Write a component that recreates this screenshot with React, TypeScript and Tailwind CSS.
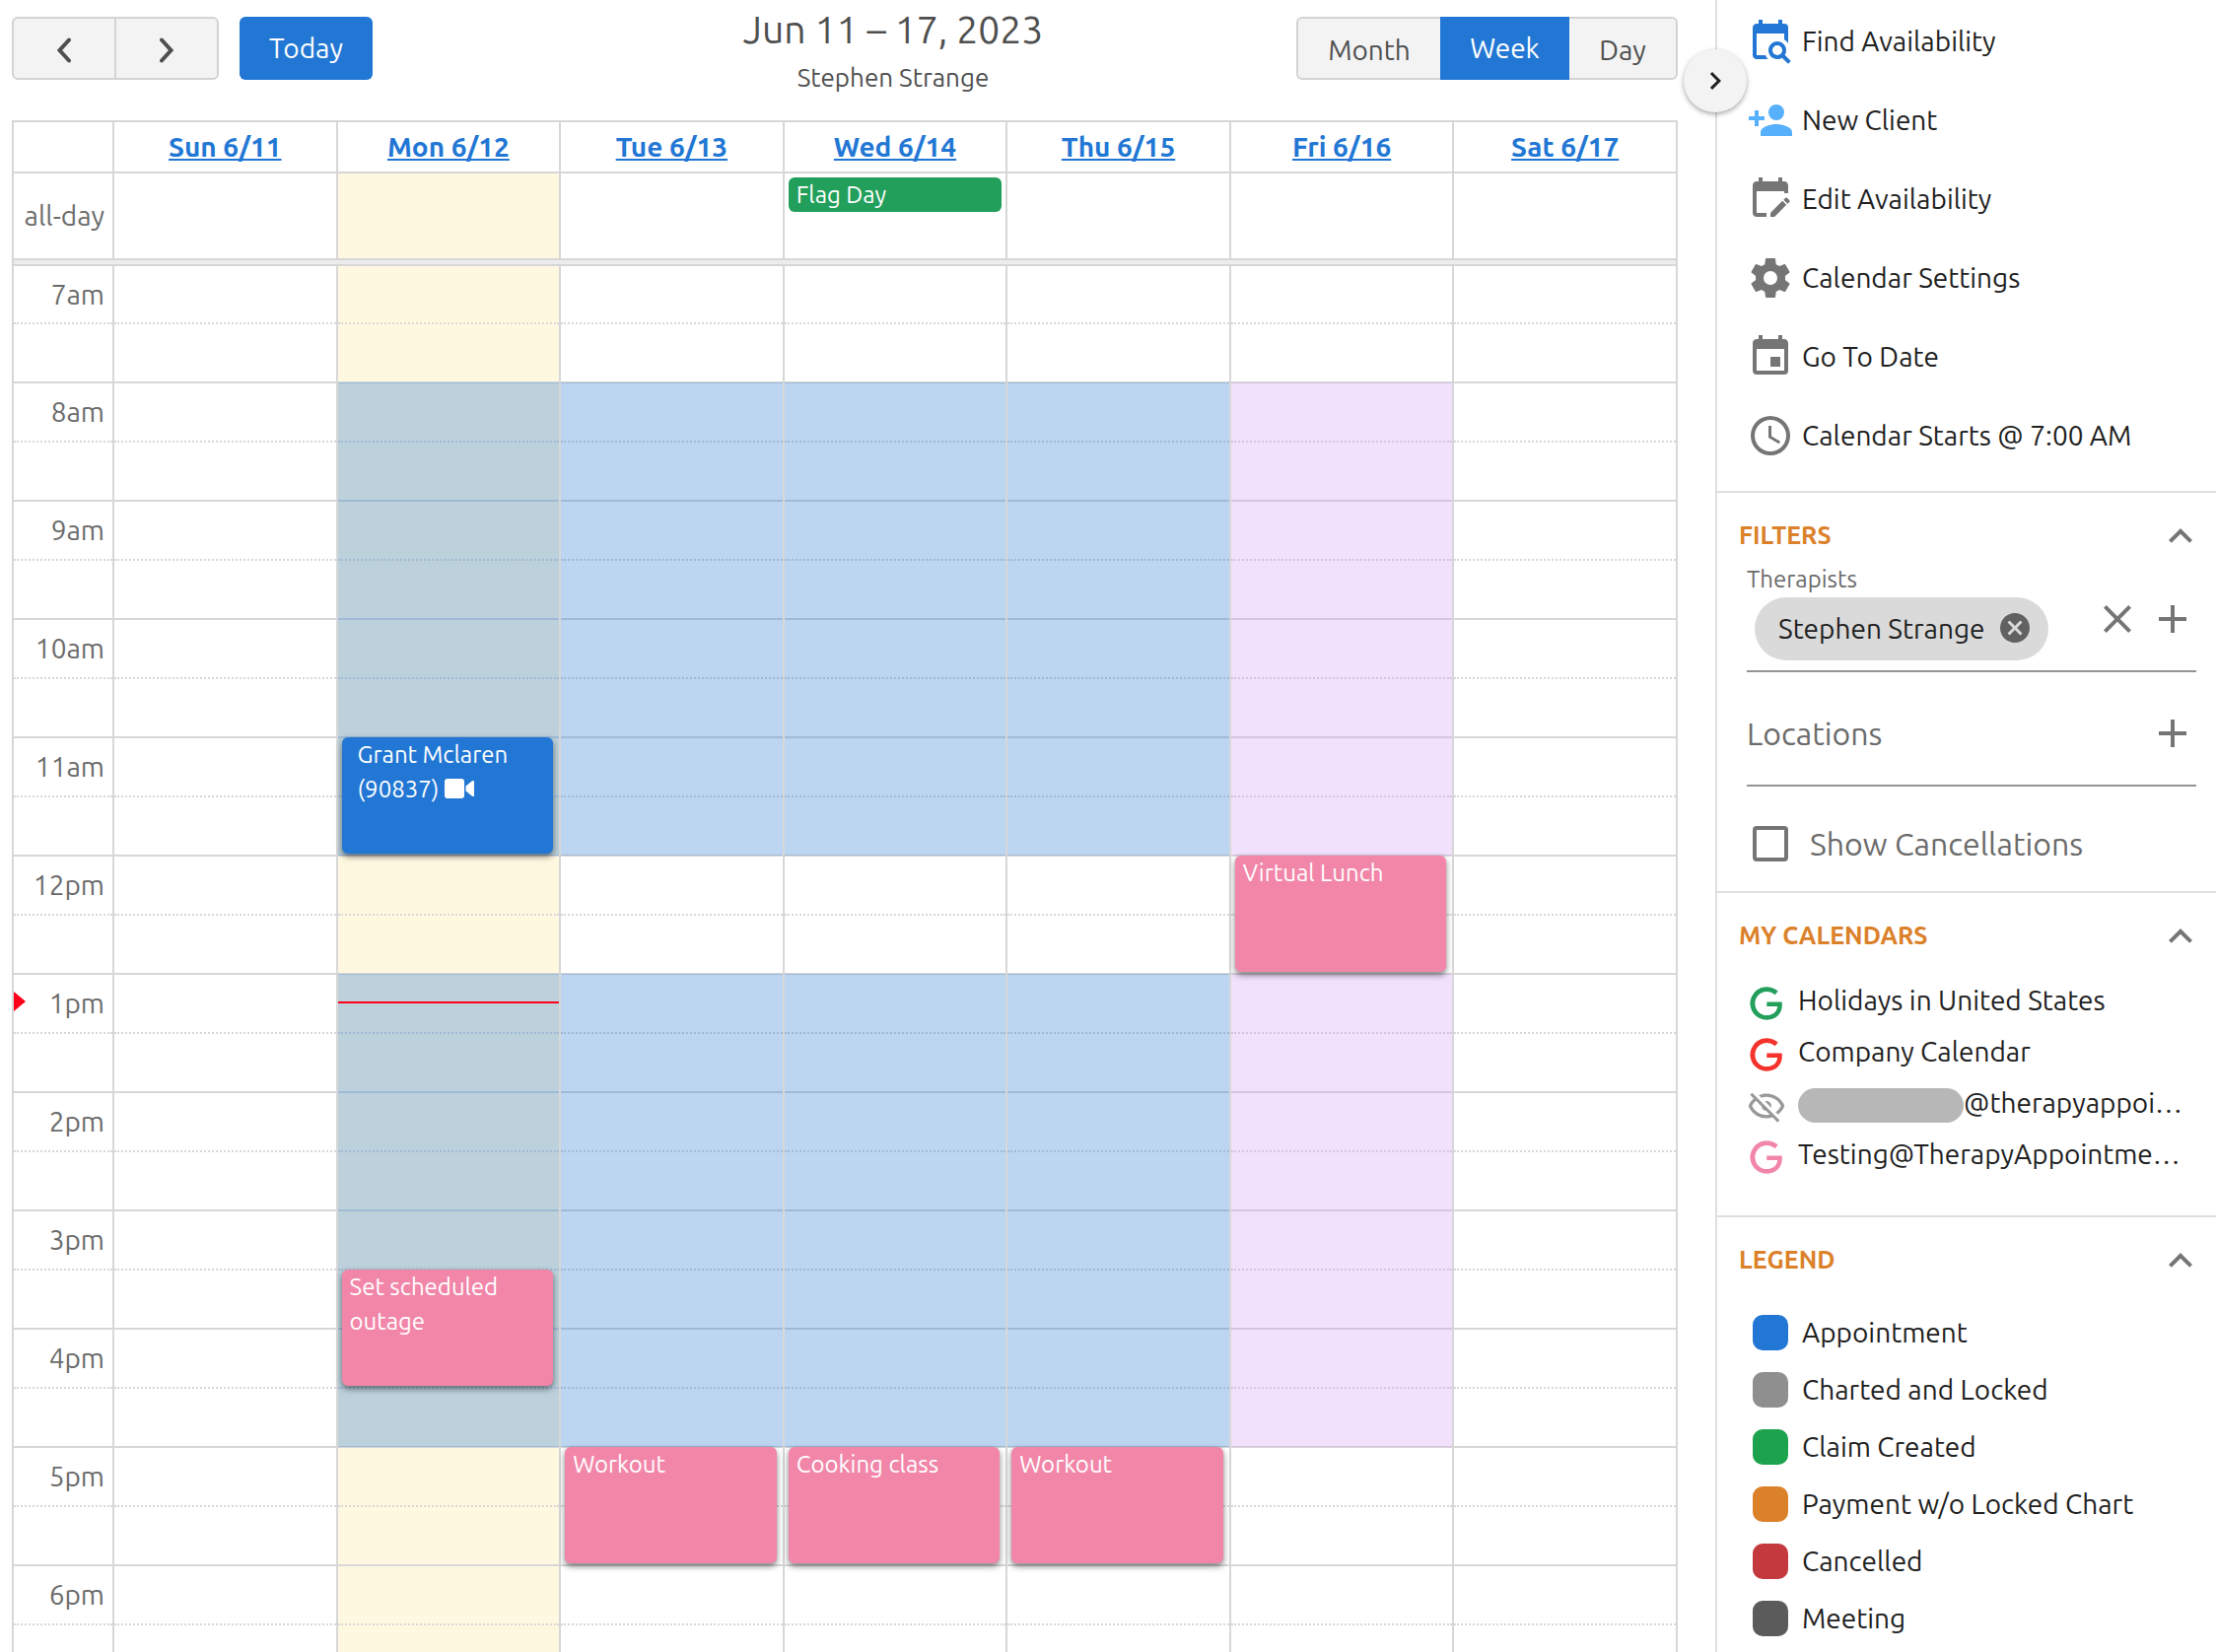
import type { ReactNode } from 'react'

type CalEvent = {
  title: string
  start: number
  end: number
  kind: 'appointment' | 'external'
  video?: boolean
}

type Day = {
  label: string
  today?: boolean
  allDay?: string
  availability?: 'office' | 'remote'
  events: CalEvent[]
}

const FIRST_HOUR = 7
const HOUR_HEIGHT = 120
const NOW = 13 + 14 / 60

const hours = [7, 8, 9, 10, 11, 12, 13, 14, 15, 16, 17, 18]

const days: Day[] = [
  { label: 'Sun 6/11', events: [] },
  {
    label: 'Mon 6/12',
    today: true,
    availability: 'office',
    events: [
      { title: 'Grant Mclaren (90837)', start: 11, end: 12, kind: 'appointment', video: true },
      { title: 'Set scheduled outage', start: 15.5, end: 16.5, kind: 'external' },
    ],
  },
  {
    label: 'Tue 6/13',
    availability: 'office',
    events: [{ title: 'Workout', start: 17, end: 18, kind: 'external' }],
  },
  {
    label: 'Wed 6/14',
    allDay: 'Flag Day',
    availability: 'office',
    events: [{ title: 'Cooking class', start: 17, end: 18, kind: 'external' }],
  },
  {
    label: 'Thu 6/15',
    availability: 'office',
    events: [{ title: 'Workout', start: 17, end: 18, kind: 'external' }],
  },
  {
    label: 'Fri 6/16',
    availability: 'remote',
    events: [{ title: 'Virtual Lunch', start: 12, end: 13, kind: 'external' }],
  },
  { label: 'Sat 6/17', events: [] },
]

const officeHours = [
  { start: 8, end: 12 },
  { start: 13, end: 17 },
]

const icons = {
  search:
    'M15.5,12C18,12 20,14 20,16.5C20,17.38 19.75,18.21 19.31,18.9L22.39,22L21,23.39L17.88,20.32C17.19,20.75 16.37,21 15.5,21C13,21 11,19 11,16.5C11,14 13,12 15.5,12M15.5,14A2.5,2.5 0 0,0 13,16.5A2.5,2.5 0 0,0 15.5,19A2.5,2.5 0 0,0 18,16.5A2.5,2.5 0 0,0 15.5,14M19,8H5V19H9.5C9.81,19.75 10.26,20.42 10.81,21H5C3.89,21 3,20.1 3,19V5C3,3.89 3.89,3 5,3H6V1H8V3H16V1H18V3H19A2,2 0 0,1 21,5V13.03C20.5,12.23 19.81,11.54 19,11V8Z',
  personAdd:
    'M15,14C12.33,14 7,15.33 7,18V20H23V18C23,15.33 17.67,14 15,14M6,10V7H4V10H1V12H4V15H6V12H9V10M15,12A4,4 0 0,0 19,8A4,4 0 0,0 15,4A4,4 0 0,0 11,8A4,4 0 0,0 15,12Z',
  edit:
    'M19,3H18V1H16V3H8V1H6V3H5C3.89,3 3,3.89 3,5V19C3,20.1 3.9,21 5,21H10V19H5V8H19V9H21V5C21,3.9 20.1,3 19,3M21.7,13.35L20.7,14.35L18.65,12.35L19.65,11.35C19.85,11.14 20.19,11.13 20.42,11.35L21.7,12.63C21.89,12.83 21.89,13.15 21.7,13.35M12,18.94V21H14.06L20.12,14.88L18.07,12.88L12,18.94Z',
  cog:
    'M12,15.5A3.5,3.5 0 0,1 8.5,12A3.5,3.5 0 0,1 12,8.5A3.5,3.5 0 0,1 15.5,12A3.5,3.5 0 0,1 12,15.5M19.43,12.97C19.47,12.65 19.5,12.33 19.5,12C19.5,11.67 19.47,11.34 19.43,11L21.54,9.37C21.73,9.22 21.78,8.95 21.66,8.73L19.66,5.27C19.54,5.05 19.27,4.96 19.05,5.05L16.56,6.05C16.04,5.66 15.5,5.32 14.87,5.07L14.5,2.42C14.46,2.18 14.25,2 14,2H10C9.75,2 9.54,2.18 9.5,2.42L9.13,5.07C8.5,5.32 7.96,5.66 7.44,6.05L4.95,5.05C4.73,4.96 4.46,5.05 4.34,5.27L2.34,8.73C2.21,8.95 2.27,9.22 2.46,9.37L4.57,11C4.53,11.34 4.5,11.67 4.5,12C4.5,12.33 4.53,12.65 4.57,12.97L2.46,14.63C2.27,14.78 2.21,15.05 2.34,15.27L4.34,18.73C4.46,18.95 4.73,19.03 4.95,18.95L7.44,17.94C7.96,18.34 8.5,18.68 9.13,18.93L9.5,21.58C9.54,21.82 9.75,22 10,22H14C14.25,22 14.46,21.82 14.5,21.58L14.87,18.93C15.5,18.67 16.04,18.34 16.56,17.94L19.05,18.95C19.27,19.03 19.54,18.95 19.66,18.73L21.66,15.27C21.78,15.05 21.73,14.78 21.54,14.63L19.43,12.97Z',
  calendar:
    'M19,19H5V8H19M16,1V3H8V1H6V3H5C3.89,3 3,3.89 3,5V19A2,2 0 0,0 5,21H19A2,2 0 0,0 21,19V5C21,3.89 20.1,3 19,3H18V1M17,12H12V17H17V12Z',
  clock:
    'M12,20A8,8 0 0,0 20,12A8,8 0 0,0 12,4A8,8 0 0,0 4,12A8,8 0 0,0 12,20M12,2A10,10 0 0,1 22,12A10,10 0 0,1 12,22C6.47,22 2,17.5 2,12A10,10 0 0,1 12,2M12.5,7V12.25L17,14.92L16.25,16.15L11,13V7H12.5Z',
  chevronUp: 'M7.41,15.41L12,10.83L16.59,15.41L18,14L12,8L6,14L7.41,15.41Z',
  chevronRight: 'M8.59,16.58L13.17,12L8.59,7.41L10,6L16,12L10,18L8.59,16.58Z',
  close:
    'M19,6.41L17.59,5L12,10.59L6.41,5L5,6.41L10.59,12L5,17.59L6.41,19L12,13.41L17.59,19L19,17.59L13.41,12L19,6.41Z',
  closeCircle:
    'M12,2C17.53,2 22,6.47 22,12C22,17.53 17.53,22 12,22C6.47,22 2,17.53 2,12C2,6.47 6.47,2 12,2M15.59,7L12,10.59L8.41,7L7,8.41L10.59,12L7,15.59L8.41,17L12,13.41L15.59,17L17,15.59L13.41,12L17,8.41L15.59,7Z',
  plus: 'M19,13H13V19H11V13H5V11H11V5H13V11H19V13Z',
  google:
    'M21.35,11.1H12.18V13.83H18.69C18.36,17.64 15.19,19.27 12.19,19.27C8.36,19.27 5,16.25 5,12C5,7.9 8.2,4.73 12.2,4.73C15.29,4.73 17.1,6.7 17.1,6.7L19,4.72C19,4.72 16.56,2 12.1,2C6.42,2 2.03,6.8 2.03,12C2.03,17.05 6.16,22 12.25,22C17.6,22 21.5,18.33 21.5,12.91C21.5,11.76 21.35,11.1 21.35,11.1V11.1Z',
  eyeOff:
    'M2,5.27L3.28,4L20,20.72L18.73,22L15.65,18.92C14.5,19.3 13.28,19.5 12,19.5C7,19.5 2.73,16.39 1,12C1.69,10.24 2.79,8.69 4.19,7.46L2,5.27M12,9A3,3 0 0,1 15,12C15,12.35 14.94,12.69 14.83,13L11,9.17C11.31,9.06 11.65,9 12,9M12,4.5C17,4.5 21.27,7.61 23,12C22.18,14.08 20.79,15.88 19,17.19L17.58,15.76C18.94,14.82 20.06,13.54 20.82,12C19.17,8.64 15.76,6.5 12,6.5C10.91,6.5 9.84,6.68 8.84,7L7.3,5.47C8.74,4.85 10.33,4.5 12,4.5M3.18,12C4.83,15.36 8.24,17.5 12,17.5C12.69,17.5 13.37,17.43 14,17.29L11.72,15C10.29,14.85 9.15,13.71 9,12.28L5.6,8.87C4.61,9.72 3.78,10.78 3.18,12Z',
}

const menuItems = [
  { label: 'Find Availability', icon: icons.search, color: 'text-[#2277d4]' },
  { label: 'New Client', icon: icons.personAdd, color: 'text-[#57b0fb]' },
  { label: 'Edit Availability', icon: icons.edit, color: 'text-[#757575]' },
  { label: 'Calendar Settings', icon: icons.cog, color: 'text-[#757575]' },
  { label: 'Go To Date', icon: icons.calendar, color: 'text-[#757575]' },
  { label: 'Calendar Starts @ 7:00 AM', icon: icons.clock, color: 'text-[#757575]' },
]

const calendars = [
  { label: 'Holidays in United States', icon: icons.google, color: 'text-[#239f5c]' },
  { label: 'Company Calendar', icon: icons.google, color: 'text-[#f4332c]' },
  { label: '@therapyappoi…', icon: icons.eyeOff, color: 'text-[#999999]', masked: true },
  { label: 'Testing@TherapyAppointme…', icon: icons.google, color: 'text-[#f186a9]' },
]

const legend = [
  { label: 'Appointment', color: 'bg-[#2277d4]' },
  { label: 'Charted and Locked', color: 'bg-[#8f8f8f]' },
  { label: 'Claim Created', color: 'bg-[#1da34d]' },
  { label: 'Payment w/o Locked Chart', color: 'bg-[#db812a]' },
  { label: 'Cancelled', color: 'bg-[#c3393e]' },
  { label: 'Meeting', color: 'bg-[#5b5b5b]' },
]

function Icon({ d, className }: { d: string; className: string }) {
  return (
    <svg viewBox="0 0 24 24" fill="currentColor" aria-hidden="true" className={`shrink-0 ${className}`}>
      <path d={d} />
    </svg>
  )
}

function formatHour(hour: number) {
  const h = hour > 12 ? hour - 12 : hour
  return `${h}${hour < 12 ? 'am' : 'pm'}`
}

function offset(time: number) {
  return Math.round((time - FIRST_HOUR) * HOUR_HEIGHT) - 2
}

function Slots({ labels }: { labels?: boolean }) {
  return (
    <>
      {hours.map((hour, i) => (
        <div key={hour}>
          <div
            className={`flex items-center justify-end pr-2 ${
              i === 0 ? 'h-[57px]' : 'h-[60px] border-t-2 border-[#d7d7d7]'
            }`}
          >
            {labels && formatHour(hour)}
          </div>
          <div className="h-[60px] border-t-2 border-dotted border-[#d7d7d7]" />
        </div>
      ))}
    </>
  )
}

function EventBlock({ event }: { event: CalEvent }) {
  return (
    <a
      href="#"
      className={`absolute left-1 right-[6px] rounded-md text-2xl leading-[35px] text-white shadow-[0_3px_6px_rgba(0,0,0,0.5)] ${
        event.kind === 'appointment' ? 'bg-[#2277d4] px-4' : 'bg-[#f186a9] px-2'
      }`}
      style={{
        top: offset(event.start),
        height: (event.end - event.start) * HOUR_HEIGHT - 2,
      }}
    >
      {event.title}
      {event.video && (
        <svg viewBox="0 0 30 20" fill="currentColor" className="ml-1.5 inline h-5 w-[30px] align-[-1px]">
          <rect width="20" height="20" rx="3" />
          <path d="M21.5 7.5 28 2.2c.8-.7 2-.2 2 .9v13.8c0 1.100-1.200 1.600-2 .9l-6.500-5.300z" />
        </svg>
      )}
    </a>
  )
}

function DayColumn({ day }: { day: Day }) {
  return (
    <div className="relative">
      <Slots />
      {day.availability &&
        officeHours.map((block) => (
          <div
            key={block.start}
            className={`absolute inset-x-0 ${
              day.availability === 'office' ? 'bg-[#2176d2]/30' : 'bg-[#d09bf5]/30'
            }`}
            style={{ top: offset(block.start), height: (block.end - block.start) * HOUR_HEIGHT }}
          />
        ))}
      {day.today && (
        <div className="absolute inset-x-0 border-t-2 border-[#ff0019]" style={{ top: offset(NOW) }} />
      )}
      {day.events.map((event) => (
        <EventBlock key={event.title} event={event} />
      ))}
    </div>
  )
}

function Toolbar() {
  const button = 'flex h-16 items-center justify-center border-2 border-[#d3d3d3] bg-[#f3f3f3] pt-[3px]'
  return (
    <header className="grid grid-cols-[485px_1fr_387px] items-start pt-[6px] text-[#4f4f4f]">
      <div className="mt-[11px] flex gap-[21px]">
        <div className="flex">
          <button aria-label="Previous week" className={`${button} w-[106px] rounded-l-md`}>
            <svg viewBox="0 0 14 26" fill="none" stroke="currentColor" strokeWidth="4" className="h-[26px] w-[14px]">
              <path d="M12 2.500 2.500 13 12 23.500" strokeLinecap="round" />
            </svg>
          </button>
          <button aria-label="Next week" className={`${button} -ml-0.5 w-[106px] rounded-r-md`}>
            <svg viewBox="0 0 14 26" fill="none" stroke="currentColor" strokeWidth="4" className="h-[26px] w-[14px]">
              <path d="M2 2.500 11.500 13 2 23.500" strokeLinecap="round" />
            </svg>
          </button>
        </div>
        <button className="h-16 w-[135px] rounded-md bg-[#2277d4] text-white">Today</button>
      </div>
      <div className="text-center">
        <h1 className="text-[39px] leading-12">Jun 11 – 17, 2023</h1>
        <p className="text-[26px] leading-[50px]">Stephen Strange</p>
      </div>
      <div className="mt-[11px] flex">
        <button className={`${button} flex-1 rounded-l-md border-r-0`}>Month</button>
        <button className="h-16 w-[131px] bg-[#2277d4] text-white">Week</button>
        <button className={`${button} w-[110px] rounded-r-md border-l-0`}>Day</button>
      </div>
    </header>
  )
}

function WeekGrid() {
  return (
    <table className="mt-[18px] w-full table-fixed border-collapse text-[#6b6b6b]">
      <thead>
        <tr>
          <th className="h-[52px] w-[102px] border-2 border-[#d7d7d7] p-0" />
          {days.map((day) => (
            <th key={day.label} scope="col" className="border-2 border-[#d7d7d7] p-0 leading-8">
              <a href="#" className="font-bold text-[#2277d4] underline">
                {day.label}
              </a>
            </th>
          ))}
        </tr>
      </thead>
      <tbody>
        <tr>
          <th scope="row" className="h-[88px] border-2 border-[#d7d7d7] py-0 pl-0 pr-2 text-right font-normal">
            all-day
          </th>
          {days.map((day) => (
            <td
              key={day.label}
              className={`border-2 border-[#d7d7d7] px-1 pt-1 pb-0 align-top ${day.today ? 'bg-[#fff8e1]' : ''}`}
            >
              {day.allDay && (
                <a
                  href="#"
                  className="block rounded-md bg-[#239f5c] px-2 text-2xl leading-[35px] text-white"
                >
                  {day.allDay}
                </a>
              )}
            </td>
          ))}
        </tr>
        <tr>
          <td colSpan={8} className="h-[6px] border-2 border-[#d7d7d7] bg-[#ececec] p-0" />
        </tr>
        <tr>
          <td className="border-2 border-[#d7d7d7] p-0 align-top">
            <div className="relative">
              <Slots labels />
              <svg
                viewBox="0 0 12 20"
                className="absolute left-0 h-5 w-3 -translate-y-1/2 text-[#ff0019]"
                style={{ top: offset(NOW) }}
              >
                <path d="M0 0l12 10L0 20z" fill="currentColor" />
              </svg>
            </div>
          </td>
          {days.map((day) => (
            <td
              key={day.label}
              className={`border-2 border-[#d7d7d7] p-0 align-top ${day.today ? 'bg-[#fff8e1]' : ''}`}
            >
              <DayColumn day={day} />
            </td>
          ))}
        </tr>
      </tbody>
    </table>
  )
}

function Section({ title, children }: { title: string; children: ReactNode }) {
  return (
    <section className="border-t-2 border-[#dfdfdf]">
      <div className="flex h-[72px] items-center justify-between pt-4 pl-[22px] pr-3">
        <h2 className="text-[25px] font-bold text-[#db812a] uppercase">{title}</h2>
        <button aria-label={`Collapse ${title}`} className="text-[#757575]">
          <Icon d={icons.chevronUp} className="size-12" />
        </button>
      </div>
      {children}
    </section>
  )
}

function Sidebar() {
  return (
    <aside className="relative w-[508px] shrink-0 border-l-2 border-[#dfdfdf] text-[#212121]">
      <button
        aria-label="Hide sidebar"
        className="absolute top-[50px] -left-[34px] flex size-16 items-center justify-center rounded-full bg-[#f3f3f3] shadow-[0_2px_5px_rgba(0,0,0,0.35)]"
      >
        <Icon d={icons.chevronRight} className="size-9" />
      </button>

      <nav className="pt-0.5 pb-4 pl-[30px]">
        {menuItems.map((item) => (
          <button key={item.label} className="flex h-20 w-full items-center gap-2 text-left">
            <Icon d={item.icon} className={`size-12 ${item.color}`} />
            {item.label}
          </button>
        ))}
      </nav>

      <Section title="Filters">
        <div className="pr-5 pl-[30px] text-[#6b6b6b]">
          <div className="border-b-2 border-[#949494] pb-[10px]">
            <p className="text-2xl leading-8">Therapists</p>
            <div className="flex items-start gap-2">
              <div className="mt-0.5 mr-auto ml-2 flex h-16 items-center gap-3 rounded-full bg-[#dadada] pr-4 pl-6 text-[#212121]">
                Stephen Strange
                <button aria-label="Remove Stephen Strange" className="pb-0.5 text-[#616161]">
                  <Icon d={icons.closeCircle} className="size-9" />
                </button>
              </div>
              <button aria-label="Clear therapists" className="text-[#757575]">
                <Icon d={icons.close} className="size-12" />
              </button>
              <button aria-label="Add therapist" className="text-[#757575]">
                <Icon d={icons.plus} className="size-12" />
              </button>
            </div>
          </div>
          <div className="flex h-[116px] items-center justify-between border-b-2 border-[#949494] pt-[10px] text-[32px]">
            Locations
            <button aria-label="Add location" className="text-[#757575]">
              <Icon d={icons.plus} className="size-12" />
            </button>
          </div>
        </div>
        <label className="flex h-[106px] items-center gap-[22px] pt-[10px] pl-9 text-[32px] text-[#6b6b6b]">
          <input type="checkbox" className="size-9 appearance-none rounded-sm border-4 border-[#757575]" />
          Show Cancellations
        </label>
      </Section>

      <Section title="My Calendars">
        <ul className="pt-[14px] pr-8 pb-[33px] pl-[30px]">
          {calendars.map((cal) => (
            <li key={cal.label} className="flex h-13 items-center gap-3">
              <Icon d={cal.icon} className={`size-10 ${cal.color}`} />
              <span className="flex items-center pb-1.5 whitespace-nowrap">
                {cal.masked && <span className="mt-1 h-[35px] w-[168px] rounded-full bg-[#b7b7b7]" />}
                {cal.label}
              </span>
            </li>
          ))}
        </ul>
      </Section>

      <Section title="Legend">
        <ul className="pt-4 pl-9">
          {legend.map((item) => (
            <li key={item.label} className="flex h-[58px] items-center gap-[14px]">
              <span className={`size-9 rounded-[10px] ${item.color}`} />
              {item.label}
            </li>
          ))}
        </ul>
      </Section>
    </aside>
  )
}

export default function App() {
  return (
    <div className="flex h-screen overflow-hidden bg-white font-[Ubuntu,'Noto_Sans',sans-serif] text-[28px]">
      <main className="min-w-0 flex-1 pr-[38px] pl-3">
        <Toolbar />
        <WeekGrid />
      </main>
      <Sidebar />
    </div>
  )
}
